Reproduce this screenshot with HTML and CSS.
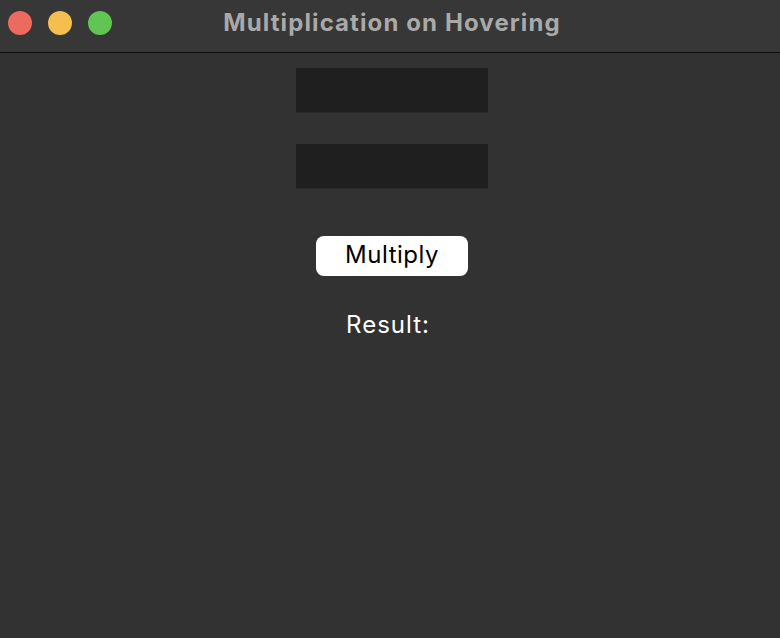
FILE: index.html
```html
<!DOCTYPE html>
<html>
<head>
<meta charset="utf-8">
<link rel="stylesheet" href="styles.css">
</head>
<body>
<div class="window">
  <div class="titlebar">
    <div class="lights">
      <span class="light red"></span>
      <span class="light yellow"></span>
      <span class="light green"></span>
    </div>
    <div class="title">Multiplication on Hovering</div>
  </div>
  <div class="content">
    <input class="field" type="text">
    <input class="field second" type="text">
    <button class="btn">Multiply</button>
    <div class="result">Result:</div>
  </div>
</div>
</body>
</html>
```
FILE: styles.css
```css
html, body {
  margin: 0;
  padding: 0;
  background: #323232;
}
.window {
  width: 780px;
  height: 638px;
  display: flex;
  flex-direction: column;
  font-family: Inter, "Liberation Sans", Arial, sans-serif;
}
.titlebar {
  height: 52px;
  background: #373737;
  border-bottom: 1px solid #0c0c0c;
  position: relative;
  display: flex;
  align-items: center;
  justify-content: center;
}
.lights {
  position: absolute;
  left: 8px;
  top: 11px;
  display: flex;
  gap: 16px;
}
.light {
  width: 24px;
  height: 24px;
  border-radius: 50%;
  display: block;
}
.red { background: #ec6a5e; }
.yellow { background: #f4bf4f; }
.green { background: #61c554; }
.title {
  color: #a9a9a9;
  font-weight: 700;
  font-size: 24px;
  letter-spacing: 1.1px;
  margin-top: -7px;
  margin-left: 4px;
}
.content {
  flex: 1;
  background: #323232;
  display: flex;
  flex-direction: column;
  align-items: center;
  padding-left: 4px;
}
.field {
  width: 192px;
  height: 45px;
  box-sizing: border-box;
  background: #1f1f1f;
  border: none;
  border-bottom: 1px solid #2a2a2a;
  margin: 15px 0 0 0;
  padding: 0;
  outline: none;
}
.field.second {
  margin-top: 31px;
}
.btn {
  margin-top: 47px;
  width: 152px;
  height: 40px;
  background: #ffffff;
  color: #000;
  border: none;
  border-radius: 8px;
  font-family: Inter, "Liberation Sans", Arial, sans-serif;
  font-size: 24px;
  letter-spacing: 0.5px;
  padding: 0 0 3px 0;
}
.result {
  margin-top: 34px;
  color: #ffffff;
  font-size: 24px;
  letter-spacing: 1px;
  margin-left: -8px;
}
```
